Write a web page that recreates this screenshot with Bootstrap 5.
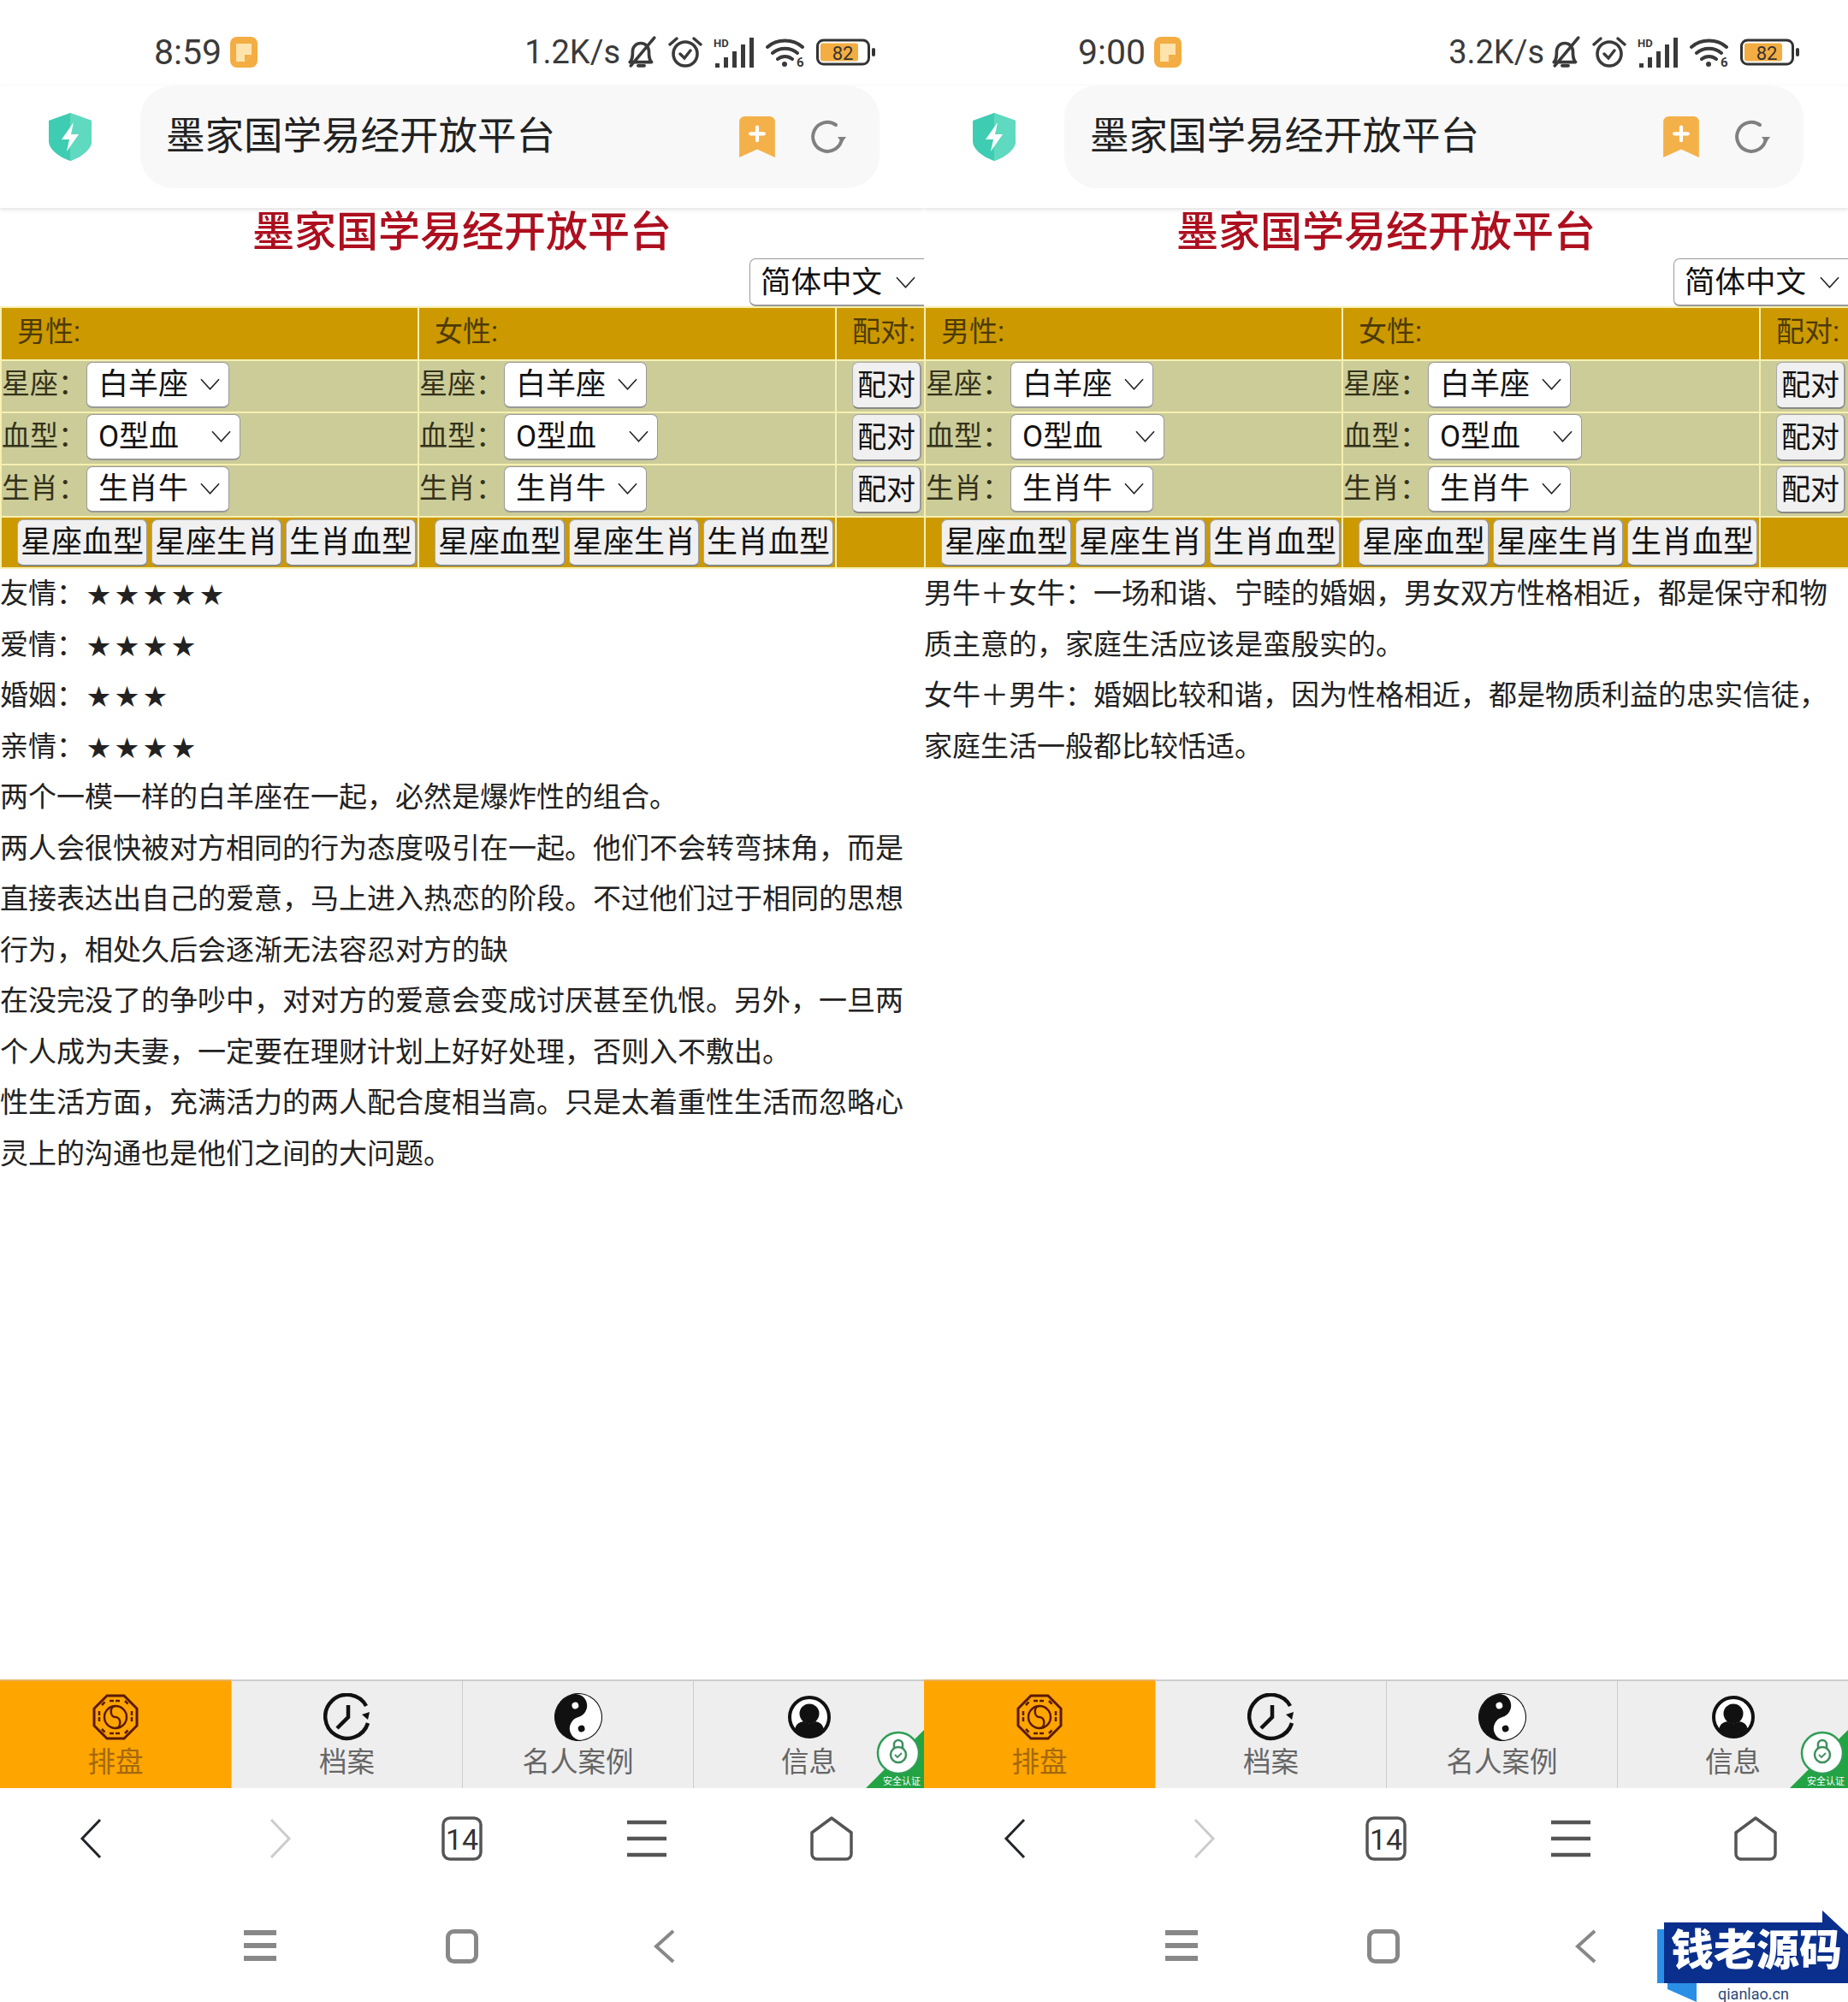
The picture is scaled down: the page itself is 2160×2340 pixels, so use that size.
<!DOCTYPE html>
<html lang="zh-CN">
<head>
  <meta charset="UTF-8">
  <title>墨家国学易经开放平台</title>
  <meta name="viewport" content="width=device-width, initial-scale=1">
  <link href="https://cdn.jsdelivr.net/npm/bootstrap@5.3.0/dist/css/bootstrap.min.css" rel="stylesheet">
  <style>
body {
  width: 2160px;
  height: 2340px;
  margin: 0;
  overflow: hidden;
  background: #fff;
  font-family: Roboto, "Noto Sans CJK SC", sans-serif;
  color: #222;
}
.phone { width: 1080px; height: 2340px; overflow: hidden; }

/* status bar */
.status-row { height: 100px; padding: 22px 56px 0 180px; color: #3a3a3a; }
.status-time { font-size: 41px; line-height: 1; margin-right: 9px; }
.status-speed { font-size: 38px; line-height: 1; margin-right: -6px; }
.status-icons { gap: 13px; }

/* address bar */
.addr-row { height: 143px; padding-bottom: 23px; box-shadow: 0 2px 5px rgba(0,0,0,.12); position: relative; }
.shield-col { width: 164px; }
.addr-box { width: 864px; height: 120px; background: #f8f8f8; border-radius: 38px; padding: 0 38px 0 30px; }
.addr-title { font-size: 45.5px; line-height: 1; color: #222; }

/* page head */
.site-title { height: 58px; margin: 0; font-size: 49px; line-height: 58px; font-weight: 500; color: #ad0f1f; text-align: center; }
.lang-row { height: 57px; }

.small-pick.form-select {
  height: 54px;
  padding: 0 0 0 13px;
  font-size: 35px;
  line-height: 52px;
  color: #111;
  border: 1px solid #999;
  border-bottom-width: 2px;
  border-radius: 7px;
  background-color: #fff;
  background-image: url("data:image/svg+xml,%3csvg xmlns='http://www.w3.org/2000/svg' viewBox='0 0 24 14'%3e%3cpath fill='none' stroke='%23222' stroke-width='1.6' d='M1 1l11 12L23 1'/%3e%3c/svg%3e");
  background-size: 23px 14px;
  background-position: right 10px center;
}
.pick-short { width: 167px; display: inline-block; vertical-align: middle; margin-bottom: 2px; }
.pick-long { width: 180px; display: inline-block; vertical-align: middle; margin-bottom: 2px; }
.lang-pick.form-select { width: 204px; height: 56px; font-size: 35.5px; padding-left: 12px; border-right-width: 0; border-radius: 7px 0 0 7px; margin-top: 1px; }

/* match table */
.pair-table.table { width: 1080px; table-layout: fixed; margin: 0; border-collapse: collapse; }
.pair-table.table td {
  padding: 0 0 2px;
  height: 61px;
  font-size: 33px;
  line-height: 1;
  vertical-align: middle;
  white-space: nowrap;
  color: #33331a;
  background-color: #cccc99;
  border: 2px solid #f6f0b0;
  box-shadow: none;
}
.pair-table.table .head-row td { height: 62px; padding-bottom: 5px; color: #4c3b06; background-color: #cc9900; }
.pair-table.table .foot-row td { height: 60px; padding-bottom: 0; background-color: #cc9900; }
.pair-table.table .head-cell { padding-left: 18px; }
.pair-table.table .match-head { padding-left: 18px; }
.pair-table.table .match-cell { padding-left: 18px; }
.col-side { width: 488px; }
.col-match { width: 104px; }

.old-btn.btn {
  padding: 0;
  height: 55px;
  font-size: 36px;
  line-height: 1;
  color: #111;
  background: #f0f0f0;
  border: 1px solid #aaa;
  border-bottom: 2px solid #888;
  border-right: 2px solid #999;
  border-radius: 7px;
  white-space: nowrap;
  overflow: hidden;
}
.btn-match { width: 81px; font-size: 34px !important; }
.btn-combo { width: 153px; }
.combo-group { gap: 4px; padding-left: 18px; }

/* result text */
.result-text { font-size: 33px; line-height: 59.5px; color: #222; margin-top: -1px; }
.result-text p { margin: 0; }
.star-run { font-size: 27px; line-height: 1; letter-spacing: 6px; padding-left: 3px; }

/* bottom tabs */
.tab-row { height: 127px; position: relative; border-top: 2px solid #ccc; background: #eee; }
.tab-cell { width: 270px; height: 125px; border-left: 1px solid #ccc; color: #666; font-size: 32.5px; line-height: 1; padding-top: 14px; }
.tab-cell:first-child { border-left: 0; }
.tab-on { background: #ffa500; color: #a4690e; border-top: 2px solid #e8b060; margin-top: -2px; height: 127px; }
.tab-icon { height: 56px; margin-bottom: 9px; }
.safe-badge { position: absolute; right: 0; bottom: 0; }

/* browser and system buttons */
.browser-row { height: 117px; }
.browser-row > div { width: 216px; }
.fwd-off { color: #ccc; }
.system-row { height: 133px; padding-top: 48px; color: #888; }
.system-row > div { width: 236px; }
.system-shift { padding-right: 7px; }

/* site stamp in the corner */
.stamp { position: absolute; right: 0; bottom: 0; width: 223px; height: 107px; }
.stamp-name { position: absolute; left: 16px; top: 18px; font-size: 50px; line-height: 58px; font-weight: 900; color: #fff; white-space: nowrap; }
.stamp-url { position: absolute; left: 71px; bottom: 0; font-size: 18px; line-height: 18px; color: #2b4a7c; }
  </style>
</head>
<body class="position-relative">
<svg class="d-none" xmlns="http://www.w3.org/2000/svg">
  <symbol id="ic-note" viewBox="0 0 32 36"><rect width="32" height="36" rx="8" fill="#f3ad42"/><path d="M7 8h18v13l-8 8H7z" fill="#ffe3ad"/><path d="M25 21h-8v8z" fill="#f3ad42"/></symbol>
  <symbol id="ic-bell" viewBox="0 0 34 36"><path d="M4 29h24c-3-3-3-7-3-12 0-5-4-9-9-9s-9 4-9 9c0 5 0 9-3 12zM13 33h7M31 2L5 33" fill="none" stroke="#3a3a3a" stroke-width="3.4" stroke-linecap="round" stroke-linejoin="round"/></symbol>
  <symbol id="ic-alarm" viewBox="0 0 40 38"><circle cx="20" cy="21" r="14" fill="none" stroke="#3a3a3a" stroke-width="3.6"/><path d="M14 21l5 5 7-9M2 10l8-7M38 10l-8-7" fill="none" stroke="#3a3a3a" stroke-width="3.4" stroke-linecap="round"/></symbol>
  <symbol id="ic-signal" viewBox="0 0 48 36"><path d="M2 36v-5h5v5zM12 36V24h5v12zM22 36V17h5v19zM32 36V9h5v27zM42 36V1h5v35z" fill="#3a3a3a"/><text x="0" y="12" font-family="Roboto, sans-serif" font-size="13" font-weight="700" fill="#3a3a3a">HD</text></symbol>
  <symbol id="ic-wifi" viewBox="0 0 46 36"><path d="M2 12c11-10 30-10 41 0M8 19c8-7 21-7 29 0M14 26c5-4 12-4 17 0" fill="none" stroke="#3a3a3a" stroke-width="4" stroke-linecap="round"/><circle cx="22" cy="32" r="3" fill="#3a3a3a"/><text x="36" y="35" font-family="Roboto, sans-serif" font-size="15" font-weight="700" fill="#3a3a3a">6</text></symbol>
  <symbol id="ic-shield" viewBox="0 0 50 56"><path d="M25 0l25 9v24c0 10-13 19-25 23C13 52 0 43 0 33V9z" fill="#3ecdb2"/><path d="M25 0l25 9v24c0 10-13 19-25 23z" fill="#5fd9bf"/><path d="M29 11L15 31h9l-3 14 14-20h-9z" fill="#fff"/></symbol>
  <symbol id="ic-mark" viewBox="0 0 40 46"><path d="M0 6a6 6 0 0 1 6-6h28a6 6 0 0 1 6 6v40l-20-9-20 9z" fill="#f4b14a"/><path d="M20 12v15M12.500 19.500h15" stroke="#fff" stroke-width="4" stroke-linecap="round"/></symbol>
  <symbol id="ic-reload" viewBox="0 0 44 44"><path d="M38 24A17 17 0 1 1 31 8" fill="none" stroke="#808080" stroke-width="4" stroke-linecap="round"/><path d="M43 22l-5 7-5-7z" fill="#808080"/></symbol>

  <symbol id="ic-bagua" viewBox="0 0 54 54"><g fill="none" stroke="#5b1a03"><path d="M17 2h20l15 15v20L37 52H17L2 37V17z" stroke-width="3"/><circle cx="27" cy="27" r="13" stroke-width="2.500"/><path d="M27 14c-7 0-7 13 0 13s7 13 0 13" stroke-width="2.500"/><path d="M20 8h14M20 46h14M8 20v14M46 20v14M11 13l5-5M38 8l5 5M11 41l5 5M38 46l5-5" stroke-width="2.500" stroke-dasharray="5 2"/></g></symbol>
  <symbol id="ic-clock" viewBox="0 0 56 56"><path d="M52 35A25.500 25.500 0 1 1 50 15" fill="none" stroke="#111" stroke-width="4.500"/><path d="M29 14v14L16 41" fill="none" stroke="#111" stroke-width="4.500"/><path d="M54 22l-2 9-7-6z" fill="#111"/></symbol>
  <symbol id="ic-yinyang" viewBox="0 0 100 100"><g transform="rotate(-15 50 50)"><circle cx="50" cy="50" r="49" fill="#fff" stroke="#111" stroke-width="2"/><path d="M50 1a49 49 0 0 0 0 98a24.500 24.500 0 0 1 0-49a24.500 24.500 0 0 0 0-49z" fill="#111"/><circle cx="50" cy="25" r="7" fill="#fff"/><circle cx="50" cy="75" r="7" fill="#111"/></g></symbol>
  <symbol id="ic-person" viewBox="0 0 50 50"><circle cx="25" cy="25" r="23" fill="#fff" stroke="#111" stroke-width="4"/><circle cx="25" cy="21" r="11.500" fill="#111"/><path d="M8 39c2-7 6-8 10-9 4 3 10 3 14 0 4 1 8 2 10 9-8 11-26 11-34 0z" fill="#111"/></symbol>
  <symbol id="ic-badge" viewBox="0 0 68 70"><path d="M0 70L68 2v68z" fill="#22a344"/><circle cx="38" cy="29" r="24" fill="#fff" stroke="#2f9e55" stroke-width="2.500"/><circle cx="38" cy="31" r="9" fill="none" stroke="#3f8f5f" stroke-width="2.500"/><path d="M33 24v-5a5 5 0 0 1 10 0v5" fill="none" stroke="#3f8f5f" stroke-width="2.500"/><path d="M34 31l3 3 5-5" fill="none" stroke="#3f8f5f" stroke-width="1.800"/><text x="20" y="66" font-family="'Noto Sans CJK SC', sans-serif" font-size="11" fill="#fff">安全认证</text></symbol>

  <symbol id="ic-prev" viewBox="0 0 26 48"><path d="M24 2L3 24l21 22" fill="none" stroke="currentColor" stroke-width="3"/></symbol>
  <symbol id="ic-next" viewBox="0 0 26 48"><path d="M2 2l21 22L2 46" fill="none" stroke="currentColor" stroke-width="3"/></symbol>
  <symbol id="ic-lines" viewBox="0 0 46 44"><path d="M0 3h46M0 22h46M0 41h46" stroke="#555" stroke-width="4.500"/></symbol>
  <symbol id="ic-home" viewBox="0 0 50 52"><path d="M2 19L25 2l23 17v25a6 6 0 0 1-6 6H8a6 6 0 0 1-6-6z" fill="none" stroke="#555" stroke-width="3.500" stroke-linejoin="round"/></symbol>
  <symbol id="ic-sys-lines" viewBox="0 0 38 38"><path d="M0 4h38M0 19h38M0 34h38" stroke="#888" stroke-width="6"/></symbol>
  <symbol id="ic-sys-square" viewBox="0 0 38 40"><rect x="2.500" y="2.500" width="33" height="35" rx="7" fill="none" stroke="#888" stroke-width="5"/></symbol>
  <symbol id="ic-sys-back" viewBox="0 0 26 40"><path d="M24 2L4 20l20 18" fill="none" stroke="#888" stroke-width="4"/></symbol>
</svg>

<div class="d-flex">
  <!-- left screen -->
  <div class="phone d-flex flex-column">
    <div class="status-row d-flex align-items-center justify-content-between">
      <div class="d-flex align-items-center"><span class="status-time">8:59</span><svg width="34" height="36"><use href="#ic-note"/></svg></div>
      <div class="d-flex align-items-center status-icons">
        <span class="status-speed">1.2K/s</span>
        <svg width="36" height="38"><use href="#ic-bell"/></svg>
        <svg width="40" height="38"><use href="#ic-alarm"/></svg>
        <svg width="48" height="36"><use href="#ic-signal"/></svg>
        <svg width="46" height="36"><use href="#ic-wifi"/></svg>
        <svg width="70" height="32" viewBox="0 0 70 32"><rect x="1.500" y="2" width="60" height="28" rx="7" fill="none" stroke="#333" stroke-width="3"/><rect x="5" y="5.500" width="44" height="21" rx="3" fill="#f3ad42"/><rect x="65" y="11" width="4" height="10" rx="2" fill="#333"/><text x="31" y="25" text-anchor="middle" font-family="Roboto, sans-serif" font-size="22" fill="#333">82</text></svg>
      </div>
    </div>
    <div class="addr-row d-flex">
      <div class="shield-col d-flex align-items-center justify-content-center"><svg width="50" height="56"><use href="#ic-shield"/></svg></div>
      <div class="addr-box d-flex align-items-center">
        <span class="addr-title">墨家国学易经开放平台</span>
        <svg class="ms-auto me-4" width="42" height="48"><use href="#ic-mark"/></svg>
        <svg class="ms-3" width="44" height="44"><use href="#ic-reload"/></svg>
      </div>
    </div>
    <h1 class="site-title">墨家国学易经开放平台</h1>
    <div class="lang-row d-flex justify-content-end">
      <select class="form-select small-pick lang-pick"><option>简体中文</option></select>
    </div>
    <table class="table pair-table">
      <colgroup><col class="col-side"><col class="col-side"><col class="col-match"></colgroup>
      <tr class="head-row"><td class="head-cell">男性:</td><td class="head-cell">女性:</td><td class="match-head">配对:</td></tr>
      <tr>
        <td>星座：<select class="form-select small-pick pick-short"><option>白羊座</option></select></td>
        <td>星座：<select class="form-select small-pick pick-short"><option>白羊座</option></select></td>
        <td class="match-cell"><button class="btn old-btn btn-match" type="button">配对</button></td>
      </tr>
      <tr>
        <td>血型：<select class="form-select small-pick pick-long"><option>O型血</option></select></td>
        <td>血型：<select class="form-select small-pick pick-long"><option>O型血</option></select></td>
        <td class="match-cell"><button class="btn old-btn btn-match" type="button">配对</button></td>
      </tr>
      <tr>
        <td>生肖：<select class="form-select small-pick pick-short"><option>生肖牛</option></select></td>
        <td>生肖：<select class="form-select small-pick pick-short"><option>生肖牛</option></select></td>
        <td class="match-cell"><button class="btn old-btn btn-match" type="button">配对</button></td>
      </tr>
      <tr class="foot-row">
        <td><div class="d-flex combo-group"><button class="btn old-btn btn-combo" type="button">星座血型</button><button class="btn old-btn btn-combo" type="button">星座生肖</button><button class="btn old-btn btn-combo" type="button">生肖血型</button></div></td>
        <td><div class="d-flex combo-group"><button class="btn old-btn btn-combo" type="button">星座血型</button><button class="btn old-btn btn-combo" type="button">星座生肖</button><button class="btn old-btn btn-combo" type="button">生肖血型</button></div></td>
        <td></td>
      </tr>
    </table>
    <div class="result-text flex-grow-1">
      <p>友情：<span class="star-run">★★★★★</span></p>
      <p>爱情：<span class="star-run">★★★★</span></p>
      <p>婚姻：<span class="star-run">★★★</span></p>
      <p>亲情：<span class="star-run">★★★★</span></p>
      <p>两个一模一样的白羊座在一起，必然是爆炸性的组合。</p>
      <p>两人会很快被对方相同的行为态度吸引在一起。他们不会转弯抹角，而是直接表达出自己的爱意，马上进入热恋的阶段。不过他们过于相同的思想行为，相处久后会逐渐无法容忍对方的缺</p>
      <p>在没完没了的争吵中，对对方的爱意会变成讨厌甚至仇恨。另外，一旦两个人成为夫妻，一定要在理财计划上好好处理，否则入不敷出。</p>
      <p>性生活方面，充满活力的两人配合度相当高。只是太着重性生活而忽略心灵上的沟通也是他们之间的大问题。</p>
    </div>
    <div class="tab-row d-flex">
      <div class="tab-cell tab-on d-flex flex-column align-items-center"><svg class="tab-icon" width="54" height="56"><use href="#ic-bagua"/></svg>排盘</div>
      <div class="tab-cell d-flex flex-column align-items-center"><svg class="tab-icon" width="56" height="56"><use href="#ic-clock"/></svg>档案</div>
      <div class="tab-cell d-flex flex-column align-items-center"><svg class="tab-icon" width="58" height="58"><use href="#ic-yinyang"/></svg>名人案例</div>
      <div class="tab-cell d-flex flex-column align-items-center"><svg class="tab-icon" width="50" height="56"><use href="#ic-person"/></svg>信息</div>
      <svg class="safe-badge" width="68" height="70"><use href="#ic-badge"/></svg>
    </div>
    <div class="browser-row d-flex align-items-center">
      <div class="text-center text-dark"><svg class="me-1" width="26" height="48"><use href="#ic-prev"/></svg></div>
      <div class="text-center fwd-off"><svg class="ms-2" width="26" height="48"><use href="#ic-next"/></svg></div>
      <div class="text-center"><svg width="48" height="52" viewBox="0 0 48 52"><rect x="2" y="2" width="44" height="48" rx="8" fill="none" stroke="#555" stroke-width="3.500"/><text x="24" y="39" text-anchor="middle" font-family="Roboto, sans-serif" font-size="34" fill="#333">14</text></svg></div>
      <div class="text-center"><svg width="46" height="44"><use href="#ic-lines"/></svg></div>
      <div class="text-center"><svg width="50" height="52"><use href="#ic-home"/></svg></div>
    </div>
    <div class="system-row d-flex justify-content-center align-items-start">
      <div class="text-center"><svg width="38" height="38"><use href="#ic-sys-lines"/></svg></div>
      <div class="text-center"><svg width="38" height="40"><use href="#ic-sys-square"/></svg></div>
      <div class="text-center"><svg width="26" height="40"><use href="#ic-sys-back"/></svg></div>
    </div>
  </div>

  <!-- right screen -->
  <div class="phone d-flex flex-column">
    <div class="status-row d-flex align-items-center justify-content-between">
      <div class="d-flex align-items-center"><span class="status-time">9:00</span><svg width="34" height="36"><use href="#ic-note"/></svg></div>
      <div class="d-flex align-items-center status-icons">
        <span class="status-speed">3.2K/s</span>
        <svg width="36" height="38"><use href="#ic-bell"/></svg>
        <svg width="40" height="38"><use href="#ic-alarm"/></svg>
        <svg width="48" height="36"><use href="#ic-signal"/></svg>
        <svg width="46" height="36"><use href="#ic-wifi"/></svg>
        <svg width="70" height="32" viewBox="0 0 70 32"><rect x="1.500" y="2" width="60" height="28" rx="7" fill="none" stroke="#333" stroke-width="3"/><rect x="5" y="5.500" width="44" height="21" rx="3" fill="#f3ad42"/><rect x="65" y="11" width="4" height="10" rx="2" fill="#333"/><text x="31" y="25" text-anchor="middle" font-family="Roboto, sans-serif" font-size="22" fill="#333">82</text></svg>
      </div>
    </div>
    <div class="addr-row d-flex">
      <div class="shield-col d-flex align-items-center justify-content-center"><svg width="50" height="56"><use href="#ic-shield"/></svg></div>
      <div class="addr-box d-flex align-items-center">
        <span class="addr-title">墨家国学易经开放平台</span>
        <svg class="ms-auto me-4" width="42" height="48"><use href="#ic-mark"/></svg>
        <svg class="ms-3" width="44" height="44"><use href="#ic-reload"/></svg>
      </div>
    </div>
    <h1 class="site-title">墨家国学易经开放平台</h1>
    <div class="lang-row d-flex justify-content-end">
      <select class="form-select small-pick lang-pick"><option>简体中文</option></select>
    </div>
    <table class="table pair-table">
      <colgroup><col class="col-side"><col class="col-side"><col class="col-match"></colgroup>
      <tr class="head-row"><td class="head-cell">男性:</td><td class="head-cell">女性:</td><td class="match-head">配对:</td></tr>
      <tr>
        <td>星座：<select class="form-select small-pick pick-short"><option>白羊座</option></select></td>
        <td>星座：<select class="form-select small-pick pick-short"><option>白羊座</option></select></td>
        <td class="match-cell"><button class="btn old-btn btn-match" type="button">配对</button></td>
      </tr>
      <tr>
        <td>血型：<select class="form-select small-pick pick-long"><option>O型血</option></select></td>
        <td>血型：<select class="form-select small-pick pick-long"><option>O型血</option></select></td>
        <td class="match-cell"><button class="btn old-btn btn-match" type="button">配对</button></td>
      </tr>
      <tr>
        <td>生肖：<select class="form-select small-pick pick-short"><option>生肖牛</option></select></td>
        <td>生肖：<select class="form-select small-pick pick-short"><option>生肖牛</option></select></td>
        <td class="match-cell"><button class="btn old-btn btn-match" type="button">配对</button></td>
      </tr>
      <tr class="foot-row">
        <td><div class="d-flex combo-group"><button class="btn old-btn btn-combo" type="button">星座血型</button><button class="btn old-btn btn-combo" type="button">星座生肖</button><button class="btn old-btn btn-combo" type="button">生肖血型</button></div></td>
        <td><div class="d-flex combo-group"><button class="btn old-btn btn-combo" type="button">星座血型</button><button class="btn old-btn btn-combo" type="button">星座生肖</button><button class="btn old-btn btn-combo" type="button">生肖血型</button></div></td>
        <td></td>
      </tr>
    </table>
    <div class="result-text flex-grow-1">
      <p>男牛＋女牛：一场和谐、宁睦的婚姻，男女双方性格相近，都是保守和物质主意的，家庭生活应该是蛮殷实的。</p>
      <p>女牛＋男牛：婚姻比较和谐，因为性格相近，都是物质利益的忠实信徒，家庭生活一般都比较恬适。</p>
    </div>
    <div class="tab-row d-flex">
      <div class="tab-cell tab-on d-flex flex-column align-items-center"><svg class="tab-icon" width="54" height="56"><use href="#ic-bagua"/></svg>排盘</div>
      <div class="tab-cell d-flex flex-column align-items-center"><svg class="tab-icon" width="56" height="56"><use href="#ic-clock"/></svg>档案</div>
      <div class="tab-cell d-flex flex-column align-items-center"><svg class="tab-icon" width="58" height="58"><use href="#ic-yinyang"/></svg>名人案例</div>
      <div class="tab-cell d-flex flex-column align-items-center"><svg class="tab-icon" width="50" height="56"><use href="#ic-person"/></svg>信息</div>
      <svg class="safe-badge" width="68" height="70"><use href="#ic-badge"/></svg>
    </div>
    <div class="browser-row d-flex align-items-center">
      <div class="text-center text-dark"><svg class="me-1" width="26" height="48"><use href="#ic-prev"/></svg></div>
      <div class="text-center fwd-off"><svg class="ms-2" width="26" height="48"><use href="#ic-next"/></svg></div>
      <div class="text-center"><svg width="48" height="52" viewBox="0 0 48 52"><rect x="2" y="2" width="44" height="48" rx="8" fill="none" stroke="#555" stroke-width="3.500"/><text x="24" y="39" text-anchor="middle" font-family="Roboto, sans-serif" font-size="34" fill="#333">14</text></svg></div>
      <div class="text-center"><svg width="46" height="44"><use href="#ic-lines"/></svg></div>
      <div class="text-center"><svg width="50" height="52"><use href="#ic-home"/></svg></div>
    </div>
    <div class="system-row system-shift d-flex justify-content-center align-items-start">
      <div class="text-center"><svg width="38" height="38"><use href="#ic-sys-lines"/></svg></div>
      <div class="text-center"><svg width="38" height="40"><use href="#ic-sys-square"/></svg></div>
      <div class="text-center"><svg width="26" height="40"><use href="#ic-sys-back"/></svg></div>
    </div>
  </div>
</div>

<div class="stamp">
  <svg width="223" height="107" viewBox="0 0 223 107">
    <path d="M0 22h12v70l34 15V85H0z" fill="#2b8fe6"/>
    <path d="M8 14h185V0l30 28v57H8z" fill="#0a2f8c"/>
  </svg>
  <span class="stamp-name">钱老源码</span>
  <span class="stamp-url">qianlao.cn</span>
</div>

<script src="https://cdn.jsdelivr.net/npm/bootstrap@5.3.0/dist/js/bootstrap.bundle.min.js"></script>
</body>
</html>
